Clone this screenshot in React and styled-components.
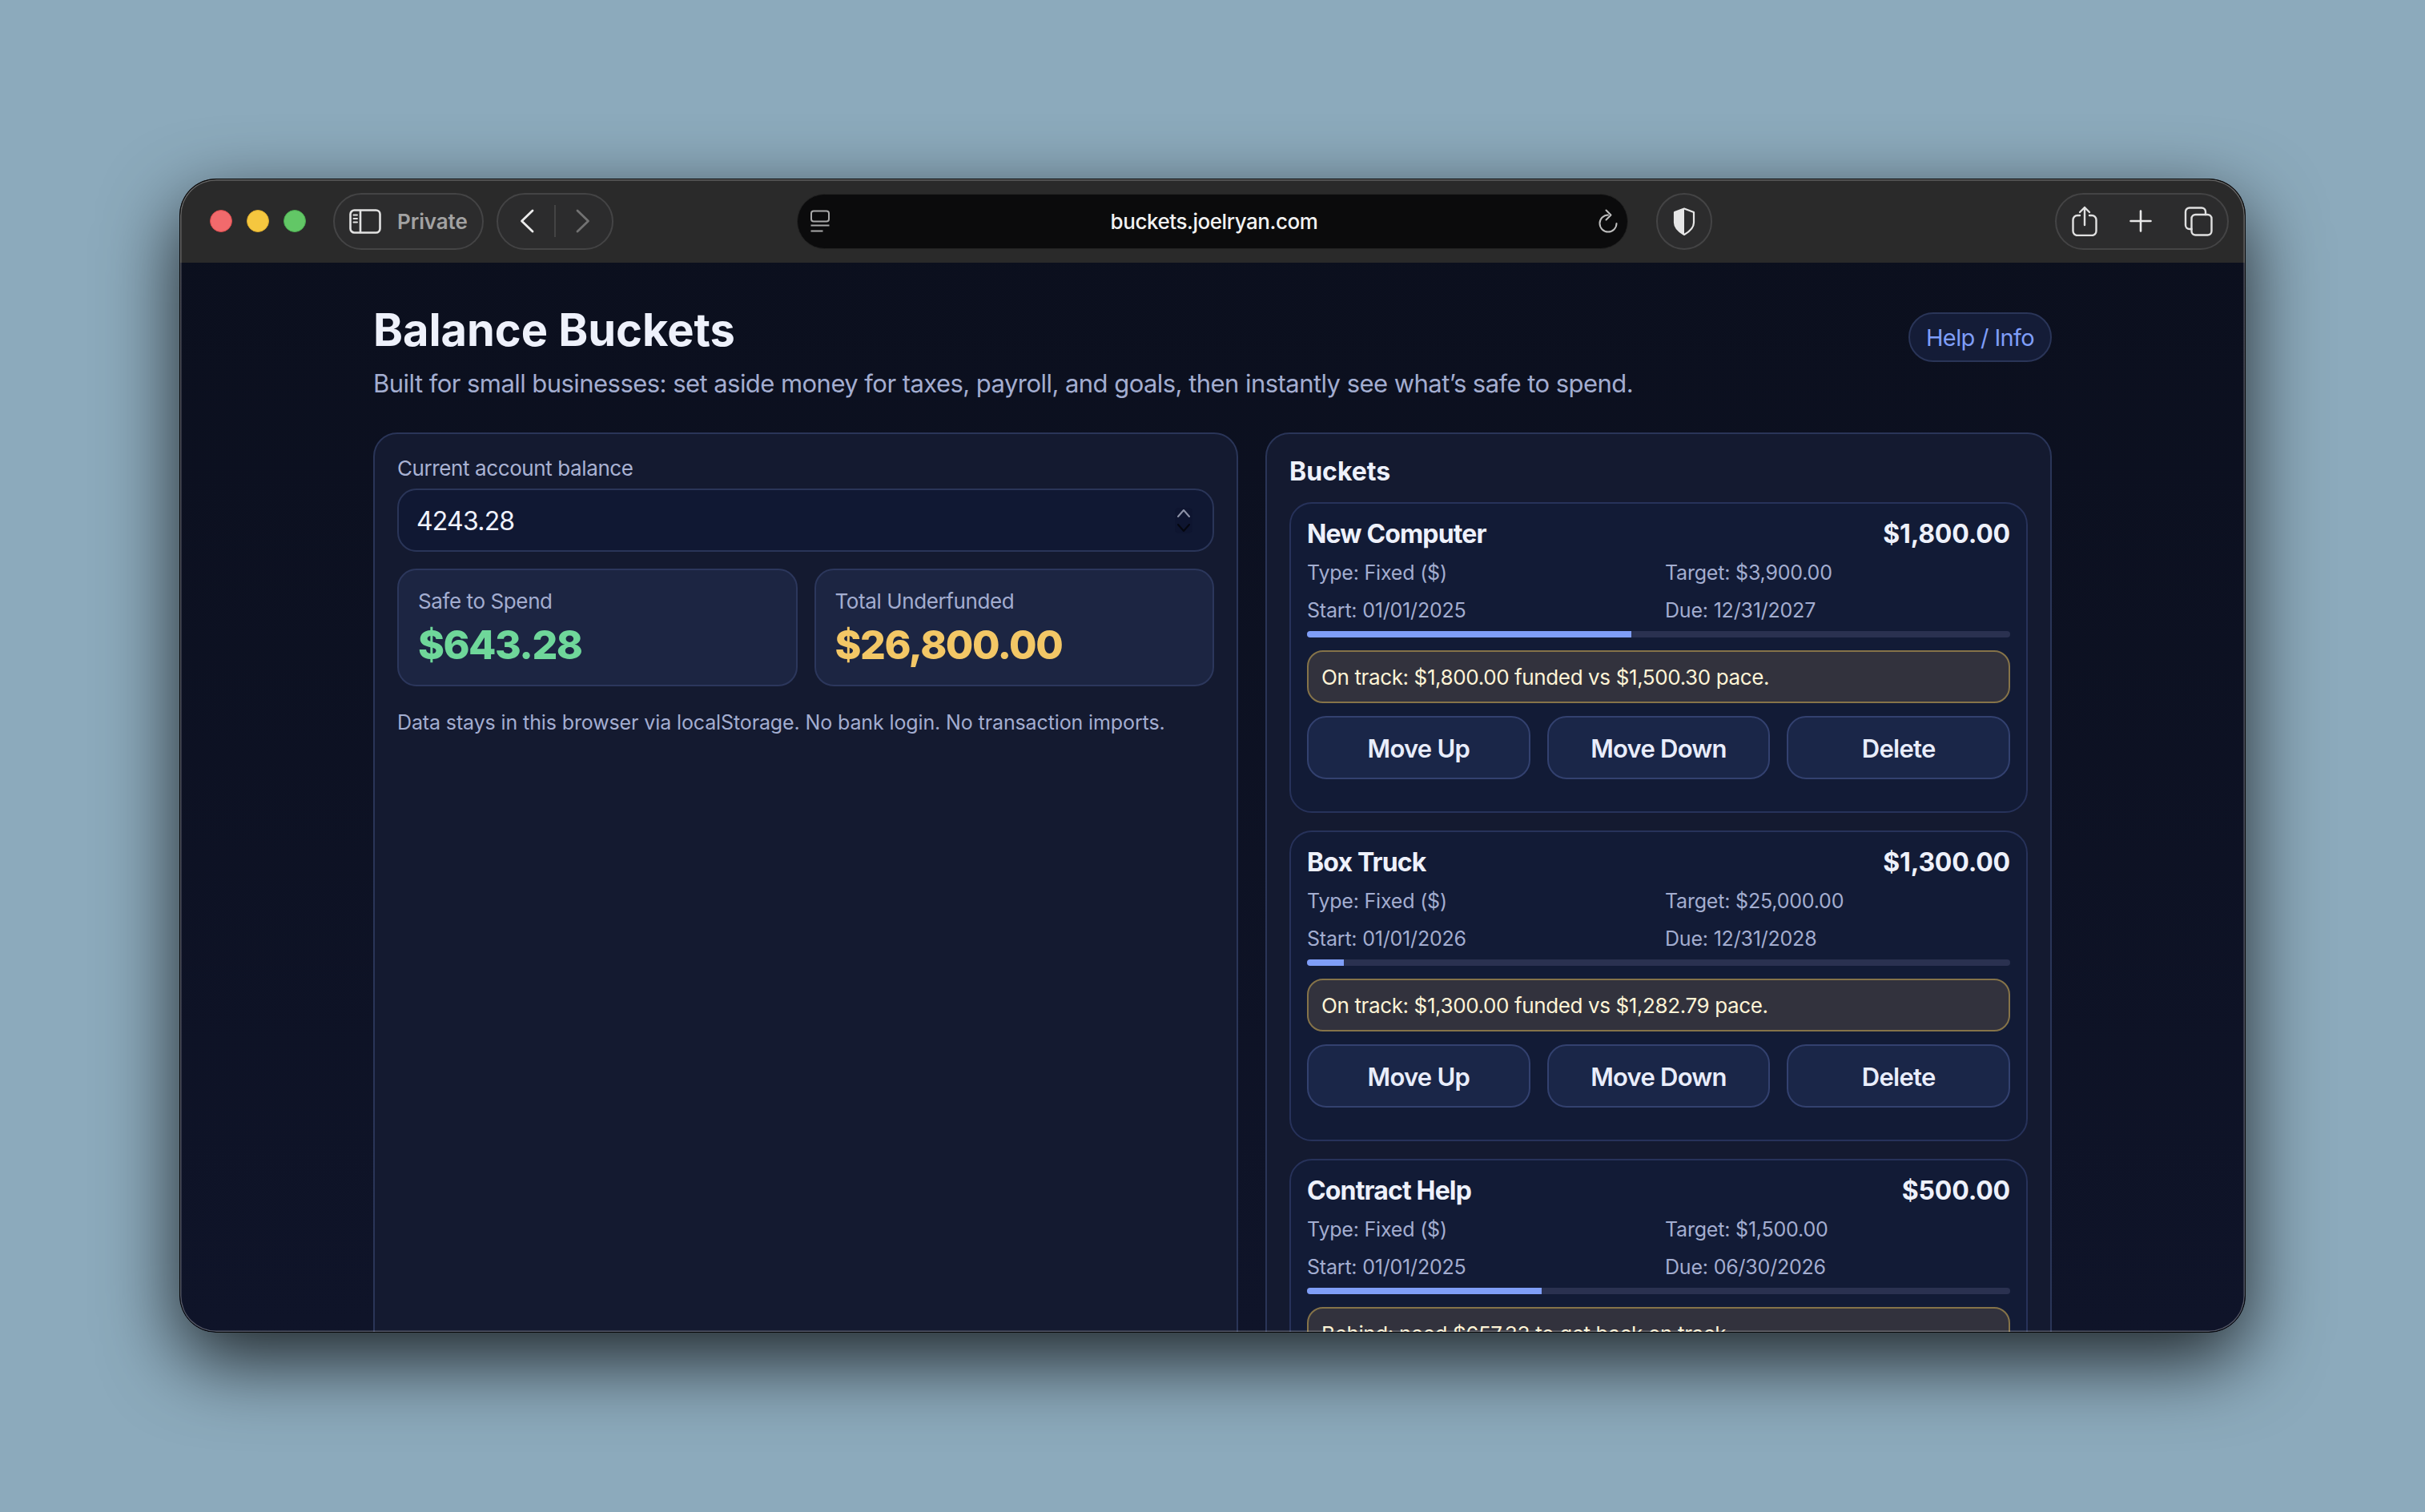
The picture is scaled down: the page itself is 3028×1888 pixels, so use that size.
import React from "react";
import styled, { createGlobalStyle } from "styled-components";

const Global = createGlobalStyle`
  html, body { margin: 0; padding: 0; }
  body {
    width: 3028px; height: 1888px; overflow: hidden;
    background: #8caabc;
    font-family: Inter, "Liberation Sans", sans-serif;
    -webkit-font-smoothing: antialiased;
  }
  * { box-sizing: border-box; }
`;

const Desktop = styled.div`
  width: 3028px; height: 1888px;
  padding: 223px 224px 224px;
`;
const Win = styled.div`
  position: relative;
  width: 2580px; height: 1441px;
  border-radius: 46px;
  overflow: hidden;
  display: flex; flex-direction: column;
  background: linear-gradient(180deg, #0b0f1d 0%, #0f1429 100%);
`;
const WinShadow = styled.div`
  border-radius: 46px;
  box-shadow: 0 34px 96px rgba(0,0,0,.78);
`;
const WinEdge = styled.div`
  position: absolute; inset: 0; border-radius: 46px; pointer-events: none;
  border: 1px solid #050505;
  box-shadow: inset 0 0 0 1.5px rgba(255,255,255,.28);
`;
const Toolbar = styled.div`
  flex: 0 0 105px; height: 105px;
  background: #2a2a2a;
  display: flex; align-items: center;
  padding: 1px 20px 0 38px;
`;
const Lights = styled.div`display: flex; gap: 18px; margin-right: 34px;`;
const Light = styled.span`
  width: 28px; height: 28px; border-radius: 50%;
  background: ${p => p.$c}; border: 1px solid ${p => p.$b};
`;
const Pill = styled.div`
  height: 71px; border-radius: 36px;
  border: 2px solid #444445;
  display: flex; align-items: center;
  background: #2c2c2d;
  width: ${p => p.$w}px;
  margin-left: ${p => p.$ml || 0}px;
`;
const PrivatePill = styled(Pill)`padding-left: 18px; gap: 20px;`;
const PrivateText = styled.span`font-size: 26px; font-weight: 600; color: #a2a2a2; letter-spacing: -.1px;`;
const NavPill = styled(Pill)`justify-content: space-between; padding: 0 27px 0 27px;`;
const NavDivider = styled.span`width: 2px; height: 40px; background: #444;`;
const ShieldPill = styled(Pill)`justify-content: center;`;
const ToolsPill = styled(Pill)`justify-content: space-between; padding: 0 18px 0 19px;`;
const UrlBar = styled.div`
  width: 1038px; height: 69px; margin-left: 229px;
  background: #0b0b0c; border-radius: 35px;
  display: flex; align-items: center; justify-content: space-between;
  padding: 0 11px 0 15px;
  border: 1px solid #232323;
`;
const UrlText = styled.span`font-size: 26px; font-weight: 500; color: #f2f2f2; letter-spacing: -.45px;`;

const Page = styled.div`
  flex: 1; min-height: 0;
  padding: 50px 242px 0;
  display: flex; flex-direction: column;
`;
const Header = styled.header`display: flex; justify-content: space-between; align-items: flex-start;`;
const Title = styled.h1`
  margin: 0; font-size: 56px; line-height: 68px; font-weight: 700;
  color: #eef1fb; letter-spacing: -.05px;
`;
const Sub = styled.p`margin: 11px 0 39px; font-size: 31px; line-height: 44px; color: #a3add0; letter-spacing: -.55px;`;
const HelpBtn = styled.button`
  margin-top: 12px; height: 62px; width: 179px; border-radius: 31px;
  background: #141c37; border: 2px solid #2a3558; color: #7f9ef8;
  font: 400 29px Inter, sans-serif; letter-spacing: -.65px; padding: 0;
`;
const Columns = styled.div`display: grid; grid-template-columns: 1080px 982px; gap: 34px; align-items: stretch;`;
const Panel = styled.section`
  background: #141a30; border: 2px solid #2a3558; border-radius: 30px;
  padding: ${p => p.$pt}px 28px 0;
`;
const Label = styled.div`font-size: 26px; line-height: 36px; color: #a9b2d3; letter-spacing: -.4px;`;
const InputBox = styled.div`
  margin-top: 7px; height: 79px; border-radius: 24px;
  background: #101833; border: 2px solid #2a3558;
  display: flex; align-items: center; justify-content: space-between;
  padding: 0 25px 0 22px;
`;
const InputValue = styled.span`font-size: 32px; color: #f0f3ff; letter-spacing: -.8px; padding-top: 2px;`;
const Cards = styled.div`display: grid; grid-template-columns: 1fr 1fr; gap: 21px; margin-top: 21px;`;
const Stat = styled.div`
  height: 147px; border-radius: 24px; background: #1c2542; border: 2px solid #2c375c;
  padding: 21px 24px;
`;
const StatLabel = styled.div`font-size: 26px; line-height: 36px; color: #a3add0; letter-spacing: -.4px;`;
const StatValue = styled.div`
  font-size: 50px; line-height: 60px; margin-top: 6px; font-weight: 800;
  letter-spacing: -1.5px;
  color: ${p => p.$c};
`;
const Note = styled.p`margin: 27px 0 0; font-size: 25px; line-height: 36px; color: #a3add0; letter-spacing: -.12px;`;
const PanelTitle = styled.h2`margin: 0 0 18px; font-size: 32px; line-height: 40px; font-weight: 700; color: #eef1fb;`;
const BucketList = styled.div`display: flex; flex-direction: column; gap: 22px;`;
const Bucket = styled.article`
  height: 388px; border-radius: 28px; background: #121b36; border: 2px solid #27325a;
  padding: 17px 20px 0;
`;
const BucketHead = styled.div`
  display: flex; justify-content: space-between; align-items: center;
  font-size: 32px; line-height: 42px; font-weight: 700; color: #eef1fb;
`;
const BucketName = styled.span`letter-spacing: -.85px;`;
const BucketAmount = styled.span`letter-spacing: -.2px;`;
const Meta = styled.div`
  display: grid; grid-template-columns: 1fr 1fr; column-gap: 16px;
  margin-top: 4px;
  font-size: 25px; line-height: 47px; color: #a3add0; letter-spacing: -.2px;
`;
const Track = styled.div`height: 8px; border-radius: 4px; background: #2a3150; overflow: hidden; margin-top: 2px;`;
const Fill = styled.div`height: 100%; background: #7f9ef8;`;
const Notice = styled.div`
  margin-top: 16px; height: 66px; border-radius: 20px;
  background: #32323d; border: 2px solid #857349;
  color: #fff4d6; font-size: 26px; letter-spacing: -.38px;
  display: flex; align-items: center; padding: 0 16px;
`;
const Actions = styled.div`display: grid; grid-template-columns: repeat(3, 1fr); gap: 21px; margin-top: 16px;`;
const ActionBtn = styled.button`
  height: 79px; border-radius: 24px; background: #1a2648; border: 2px solid #33416f;
  color: #e9edfb; font: 600 31px Inter, sans-serif; letter-spacing: -.75px; padding: 2px 0 0;
`;

const Ico = styled.svg`display: block; flex: none;`;
const lineProps = { fill: "none", strokeLinecap: "round", strokeLinejoin: "round" };

const SidebarIcon = () => (
  <Ico width="40" height="31" viewBox="0 0 40 31" {...lineProps} stroke="#e2e2e2" strokeWidth="2.6">
    <rect x="1.5" y="1.5" width="37" height="28" rx="5" />
    <path d="M14 2v27" />
    <path d="M5.5 7.5h4.5M5.5 12h4.5M5.5 16.5h4.5" strokeWidth="2" />
  </Ico>
);
const Chev = ({ dir, c }) => (
  <Ico width="18" height="30" viewBox="0 0 18 30" {...lineProps} stroke={c} strokeWidth="2.8">
    <path d={dir === "l" ? "M16 2 2.5 15 16 28" : "M2 2l13.5 13L2 28"} />
  </Ico>
);
const PageIcon = () => (
  <Ico width="26" height="28" viewBox="0 0 26 28" {...lineProps} stroke="#a8a8a8" strokeWidth="2">
    <rect x="2" y="1.5" width="22" height="13" rx="3" />
    <path d="M1.5 19.5h23M1.5 26.5h15" strokeWidth="2.2" strokeLinecap="butt" />
  </Ico>
);
const ReloadIcon = () => (
  <Ico width="26" height="30" viewBox="0 0 26 30" {...lineProps} stroke="#bdbdbd" strokeWidth="2">
    <path d="M13 7.5A10.5 10.5 0 1 0 23.5 18" />
    <path d="M10.5 1.5l6 6-6 6" />
  </Ico>
);
const ShieldIcon = () => (
  <Ico width="30" height="35" viewBox="0 0 30 35">
    <path d="M15 1.5 3 6v13c0 6 5 11 12 15z" fill="#e6e6e6" />
    <path d="M15 1.5 27 6v13c0 6-5 11-12 15-7-4-12-9-12-15V6z" fill="none" stroke="#e6e6e6" strokeWidth="2.2" strokeLinejoin="round" />
  </Ico>
);
const ShareIcon = () => (
  <Ico width="32" height="38" viewBox="0 0 32 38" {...lineProps} stroke="#e0e0e0" strokeWidth="2.4">
    <path d="M10 12H7a5.5 5.5 0 0 0-5.5 5.5v14A5.5 5.5 0 0 0 7 37h18a5.5 5.5 0 0 0 5.5-5.5v-14A5.5 5.5 0 0 0 25 12h-3" />
    <path d="M16 24V2M10 8l6-6 6 6" />
  </Ico>
);
const PlusIcon = () => (
  <Ico width="28" height="28" viewBox="0 0 28 28" {...lineProps} stroke="#e8e8e8" strokeWidth="2.6">
    <path d="M14 1.5v25M1.5 14h25" />
  </Ico>
);
const TabsIcon = () => (
  <Ico width="36" height="37" viewBox="0 0 36 37" {...lineProps} stroke="#e0e0e0" strokeWidth="2.4">
    <rect x="9.5" y="10" width="25" height="25.5" rx="5" />
    <path d="M9.5 28H7a5 5 0 0 1-5-5V6.5a5 5 0 0 1 5-5h15a5 5 0 0 1 5 5V10" />
  </Ico>
);
const SpinnerIcon = () => (
  <Ico width="22" height="32" viewBox="0 0 22 32" {...lineProps} strokeWidth="2">
    <rect x="0" y="0" width="22" height="32" rx="5" fill="#0e1530" />
    <path d="M4 11 11 3l7 8" stroke="#8e93a8" />
    <path d="M4 21l7 8 7-8" stroke="#05070f" />
  </Ico>
);

const buckets = [
  { name: "New Computer", amount: "$1,800.00", target: "$3,900.00", start: "01/01/2025", due: "12/31/2027", pct: 46.15, note: "On track: $1,800.00 funded vs $1,500.30 pace." },
  { name: "Box Truck", amount: "$1,300.00", target: "$25,000.00", start: "01/01/2026", due: "12/31/2028", pct: 5.2, note: "On track: $1,300.00 funded vs $1,282.79 pace." },
  { name: "Contract Help", amount: "$500.00", target: "$1,500.00", start: "01/01/2025", due: "06/30/2026", pct: 33.33, note: "Behind: need $657.33 to get back on track." },
];

export default function App() {
  return (
    <>
      <Global />
      <Desktop>
        <WinShadow>
          <Win>
            <Toolbar>
              <Lights>
                <Light $c="#f26a6c" $b="#d64a4c" />
                <Light $c="#f5c73f" $b="#d8a92c" />
                <Light $c="#62c766" $b="#4aa94f" />
              </Lights>
              <PrivatePill $w={188}>
                <SidebarIcon />
                <PrivateText>Private</PrivateText>
              </PrivatePill>
              <NavPill $w={146} $ml={16}>
                <Chev dir="l" c="#ececec" />
                <NavDivider />
                <Chev dir="r" c="#727272" />
              </NavPill>
              <UrlBar>
                <PageIcon />
                <UrlText>buckets.joelryan.com</UrlText>
                <ReloadIcon />
              </UrlBar>
              <ShieldPill $w={70} $ml={35}><ShieldIcon /></ShieldPill>
              <ToolsPill $w={217} $ml={428}>
                <ShareIcon />
                <PlusIcon />
                <TabsIcon />
              </ToolsPill>
            </Toolbar>
            <Page>
              <Header>
                <div>
                  <Title>Balance Buckets</Title>
                  <Sub>Built for small businesses: set aside money for taxes, payroll, and goals, then instantly see what’s safe to spend.</Sub>
                </div>
                <HelpBtn>Help / Info</HelpBtn>
              </Header>
              <Columns>
                <Panel $pt={25}>
                  <Label>Current account balance</Label>
                  <InputBox>
                    <InputValue>4243.28</InputValue>
                    <SpinnerIcon />
                  </InputBox>
                  <Cards>
                    <Stat>
                      <StatLabel>Safe to Spend</StatLabel>
                      <StatValue $c="#6fd79a">$643.28</StatValue>
                    </Stat>
                    <Stat>
                      <StatLabel>Total Underfunded</StatLabel>
                      <StatValue $c="#f3c766">$26,800.00</StatValue>
                    </Stat>
                  </Cards>
                  <Note>Data stays in this browser via localStorage. No bank login. No transaction imports.</Note>
                </Panel>
                <Panel $pt={27}>
                  <PanelTitle>Buckets</PanelTitle>
                  <BucketList>
                    {buckets.map(b => (
                      <Bucket key={b.name}>
                        <BucketHead><BucketName>{b.name}</BucketName><BucketAmount>{b.amount}</BucketAmount></BucketHead>
                        <Meta>
                          <span>Type: Fixed ($)</span>
                          <span>Target: {b.target}</span>
                          <span>Start: {b.start}</span>
                          <span>Due: {b.due}</span>
                        </Meta>
                        <Track><Fill style={{ width: `${b.pct}%` }} /></Track>
                        <Notice>{b.note}</Notice>
                        <Actions>
                          <ActionBtn>Move Up</ActionBtn>
                          <ActionBtn>Move Down</ActionBtn>
                          <ActionBtn>Delete</ActionBtn>
                        </Actions>
                      </Bucket>
                    ))}
                  </BucketList>
                </Panel>
              </Columns>
            </Page>
            <WinEdge />
          </Win>
        </WinShadow>
      </Desktop>
    </>
  );
}
